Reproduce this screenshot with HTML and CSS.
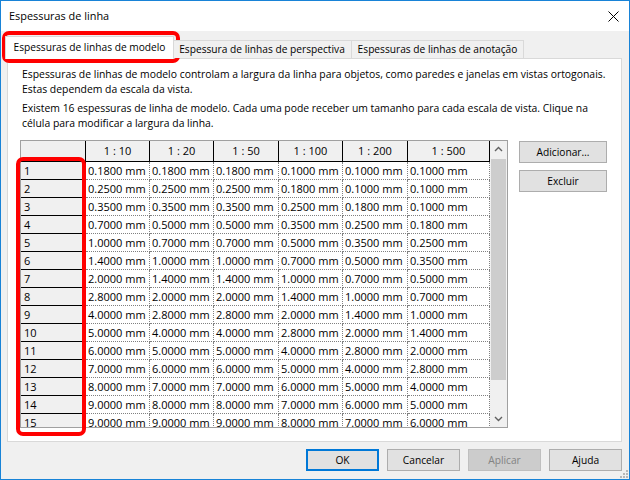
FILE: index.html
```html
<!DOCTYPE html>
<html lang="pt">
<head>
<meta charset="utf-8">
<title>Espessuras de linha</title>
<link rel="stylesheet" href="styles.css">
</head>
<body>
<div class="window">
  <div class="titlebar">
    <span class="title">Espessuras de linha</span>
    <svg class="close" width="11" height="11" viewBox="0 0 11 11"><path d="M0.5 0.5 L10.5 10.5 M10.5 0.5 L0.5 10.5" stroke="#000" stroke-width="1" fill="none"/></svg>
  </div>
  <div class="main">
    <div class="tabs">
      <div class="tab active">Espessuras de linhas de modelo</div>
      <div class="tab tab2">Espessura de linhas de perspectiva</div>
      <div class="tab tab3">Espessuras de linhas de anotação</div>
    </div>
    <div class="panel">
      <p class="desc">Espessuras de linhas de modelo controlam a largura da linha para objetos, como paredes e janelas em vistas ortogonais.<br>Estas dependem da escala da vista.</p>
      <p class="desc last">Existem 16 espessuras de linha de modelo. Cada uma pode receber um tamanho para cada escala de vista. Clique na<br>célula para modificar a largura da linha.</p>
      <div class="grid-area">
        <div class="grid-box">
          <div class="table">
            <div class="hc"></div><div class="hc">1 : 10</div><div class="hc">1 : 20</div><div class="hc">1 : 50</div><div class="hc">1 : 100</div><div class="hc">1 : 200</div><div class="hc">1 : 500</div>
            <div class="rh">1</div><div class="c">0.1800 mm</div><div class="c">0.1800 mm</div><div class="c">0.1800 mm</div><div class="c">0.1000 mm</div><div class="c">0.1000 mm</div><div class="c">0.1000 mm</div>
            <div class="rh">2</div><div class="c">0.2500 mm</div><div class="c">0.2500 mm</div><div class="c">0.2500 mm</div><div class="c">0.1800 mm</div><div class="c">0.1000 mm</div><div class="c">0.1000 mm</div>
            <div class="rh">3</div><div class="c">0.3500 mm</div><div class="c">0.3500 mm</div><div class="c">0.3500 mm</div><div class="c">0.2500 mm</div><div class="c">0.1800 mm</div><div class="c">0.1000 mm</div>
            <div class="rh">4</div><div class="c">0.7000 mm</div><div class="c">0.5000 mm</div><div class="c">0.5000 mm</div><div class="c">0.3500 mm</div><div class="c">0.2500 mm</div><div class="c">0.1800 mm</div>
            <div class="rh">5</div><div class="c">1.0000 mm</div><div class="c">0.7000 mm</div><div class="c">0.7000 mm</div><div class="c">0.5000 mm</div><div class="c">0.3500 mm</div><div class="c">0.2500 mm</div>
            <div class="rh">6</div><div class="c">1.4000 mm</div><div class="c">1.0000 mm</div><div class="c">1.0000 mm</div><div class="c">0.7000 mm</div><div class="c">0.5000 mm</div><div class="c">0.3500 mm</div>
            <div class="rh">7</div><div class="c">2.0000 mm</div><div class="c">1.4000 mm</div><div class="c">1.4000 mm</div><div class="c">1.0000 mm</div><div class="c">0.7000 mm</div><div class="c">0.5000 mm</div>
            <div class="rh">8</div><div class="c">2.8000 mm</div><div class="c">2.0000 mm</div><div class="c">2.0000 mm</div><div class="c">1.4000 mm</div><div class="c">1.0000 mm</div><div class="c">0.7000 mm</div>
            <div class="rh">9</div><div class="c">4.0000 mm</div><div class="c">2.8000 mm</div><div class="c">2.8000 mm</div><div class="c">2.0000 mm</div><div class="c">1.4000 mm</div><div class="c">1.0000 mm</div>
            <div class="rh">10</div><div class="c">5.0000 mm</div><div class="c">4.0000 mm</div><div class="c">4.0000 mm</div><div class="c">2.8000 mm</div><div class="c">2.0000 mm</div><div class="c">1.4000 mm</div>
            <div class="rh">11</div><div class="c">6.0000 mm</div><div class="c">5.0000 mm</div><div class="c">5.0000 mm</div><div class="c">4.0000 mm</div><div class="c">2.8000 mm</div><div class="c">2.0000 mm</div>
            <div class="rh">12</div><div class="c">7.0000 mm</div><div class="c">6.0000 mm</div><div class="c">6.0000 mm</div><div class="c">5.0000 mm</div><div class="c">4.0000 mm</div><div class="c">2.8000 mm</div>
            <div class="rh">13</div><div class="c">8.0000 mm</div><div class="c">7.0000 mm</div><div class="c">7.0000 mm</div><div class="c">6.0000 mm</div><div class="c">5.0000 mm</div><div class="c">4.0000 mm</div>
            <div class="rh">14</div><div class="c">9.0000 mm</div><div class="c">8.0000 mm</div><div class="c">8.0000 mm</div><div class="c">7.0000 mm</div><div class="c">6.0000 mm</div><div class="c">5.0000 mm</div>
            <div class="rh">15</div><div class="c">9.0000 mm</div><div class="c">9.0000 mm</div><div class="c">9.0000 mm</div><div class="c">8.0000 mm</div><div class="c">7.0000 mm</div><div class="c">6.0000 mm</div>
          </div>
          <div class="scroll">
            <svg class="arrow" width="17" height="17" viewBox="0 0 17 17"><path d="M5 10 L8.5 6.5 L12 10" stroke="#606060" stroke-width="1.4" fill="none"/></svg>
            <div class="track"><div class="thumb"></div></div>
            <svg class="arrow" width="17" height="17" viewBox="0 0 17 17"><path d="M5 7 L8.5 10.5 L12 7" stroke="#606060" stroke-width="1.4" fill="none"/></svg>
          </div>
        </div>
        <div class="side">
          <button class="btn side-btn">Adicionar…</button>
          <button class="btn side-btn">Excluir</button>
        </div>
      </div>
    </div>
    <div class="footer">
      <button class="btn foot-btn default">OK</button>
      <button class="btn foot-btn">Cancelar</button>
      <button class="btn foot-btn disabled">Aplicar</button>
      <button class="btn foot-btn">Ajuda</button>
    </div>
  </div>
</div>
<div class="mark mark-tab"></div>
<div class="mark mark-col"></div>
<svg class="grip" width="8" height="8" viewBox="0 0 8 8"><rect x="6" y="0" width="2" height="2" fill="#b8b8b8"/><rect x="3" y="3" width="2" height="2" fill="#b8b8b8"/><rect x="6" y="3" width="2" height="2" fill="#b8b8b8"/><rect x="0" y="6" width="2" height="2" fill="#b8b8b8"/><rect x="3" y="6" width="2" height="2" fill="#b8b8b8"/><rect x="6" y="6" width="2" height="2" fill="#b8b8b8"/></svg>
</body>
</html>
```
FILE: styles.css
```css
html, body {
  margin: 0;
  padding: 0;
}
body {
  width: 630px;
  height: 480px;
  position: relative;
  overflow: hidden;
  font-family: "Open Sans", "Noto Sans", sans-serif;
  font-size: 10.2px;
  color: #000;
  background: #fff;
}
.window {
  box-sizing: border-box;
  width: 630px;
  height: 480px;
  border: 1px solid #1883d7;
  display: flex;
  flex-direction: column;
  background: #f0f0f0;
}
.titlebar {
  flex: none;
  height: 30px;
  background: #fff;
  display: flex;
  align-items: center;
  padding: 0 10px 0 8px;
}
.title {
  font-size: 10.9px;
  line-height: 16px;
}
.close {
  margin-left: auto;
  display: block;
}
.main {
  flex: 1;
  display: flex;
  flex-direction: column;
  padding: 5px 7px 0 6px;
}
.tabs {
  display: flex;
  align-items: flex-start;
  height: 23px;
  margin: 0 0 -1px -2px;
  position: relative;
  z-index: 1;
}
.tab {
  box-sizing: border-box;
  height: 18px;
  margin-top: 4px;
  border: 1px solid #d9d9d9;
  border-bottom: none;
  background: #f0f0f0;
  text-align: center;
  line-height: 15px;
  padding-top: 1px;
  white-space: nowrap;
}
.tab.active {
  width: 169px;
  height: 23px;
  margin-top: 0;
  margin-right: -2px;
  padding-top: 3px;
  background: #fff;
  position: relative;
  z-index: 2;
}
.tab2 {
  width: 180px;
}
.tab3 {
  width: 173px;
  margin-left: -1px;
}
.panel {
  box-sizing: border-box;
  width: 615px;
  height: 384px;
  background: #fff;
  border: 1px solid #d9d9d9;
  padding: 8px 12px 0 12px;
}
.desc {
  margin: 0 0 4px 2px;
  font-size: 10.4px;
  line-height: 15px;
  white-space: nowrap;
}
.desc.last {
  margin-bottom: 9px;
}
.grid-area {
  display: flex;
  align-items: flex-start;
  gap: 11px;
}
.grid-box {
  box-sizing: border-box;
  width: 488px;
  height: 288px;
  border: 1px solid #a0a0a0;
  display: flex;
  overflow: hidden;
}
.table {
  width: 469px;
  flex: none;
  display: grid;
  grid-template-columns: 65px 64px 64px 65px 64px 65px 82px;
  grid-template-rows: 21px;
  grid-auto-rows: 18px;
  overflow: hidden;
  font-size: 11px;
}
.hc {
  box-sizing: border-box;
  background: #f0f0f0;
  border-right: 1px solid #000;
  border-bottom: 1px solid #000;
  text-align: center;
  line-height: 20px;
  white-space: nowrap;
}
.rh {
  box-sizing: border-box;
  background: #f0f0f0;
  border-right: 1px solid #000;
  border-bottom: 1px solid #000;
  padding-left: 3px;
  line-height: 17px;
}
.c {
  box-sizing: border-box;
  border-right: 1px dotted #808080;
  border-bottom: 1px dotted #808080;
  padding-left: 2px;
  line-height: 17px;
  white-space: nowrap;
  overflow: hidden;
}
.scroll {
  width: 17px;
  flex: none;
  background: #f0f0f0;
  display: flex;
  flex-direction: column;
}
.arrow {
  display: block;
  flex: none;
}
.track {
  flex: 1;
  padding: 1px 1px 0 1px;
}
.thumb {
  height: 221px;
  background: #cdcdcd;
}
.side {
  display: flex;
  flex-direction: column;
  gap: 7px;
  margin-top: 1px;
}
.btn {
  box-sizing: border-box;
  height: 22px;
  margin: 0;
  padding: 0;
  background: #e1e1e1;
  border: 1px solid #adadad;
  border-radius: 0;
  font-family: inherit;
  font-size: inherit;
  color: #000;
  line-height: 20px;
  text-align: center;
}
.side-btn {
  width: 88px;
}
.footer {
  display: flex;
  justify-content: flex-end;
  gap: 8px;
  margin-top: 7px;
}
.foot-btn {
  width: 73px;
}
.btn.default {
  border: 2px solid #0078d7;
  line-height: 18px;
}
.btn.disabled {
  background: #cccccc;
  border-color: #bfbfbf;
  color: #838383;
}
.mark {
  position: absolute;
  box-sizing: border-box;
  border: 4px solid #ff0000;
  border-radius: 7px;
  pointer-events: none;
}
.mark-tab {
  left: 2px;
  top: 31px;
  width: 178px;
  height: 32px;
}
.mark-col {
  left: 16px;
  top: 157px;
  width: 70px;
  height: 279px;
}
.grip {
  position: absolute;
  right: 2px;
  bottom: 2px;
  display: block;
}
```
